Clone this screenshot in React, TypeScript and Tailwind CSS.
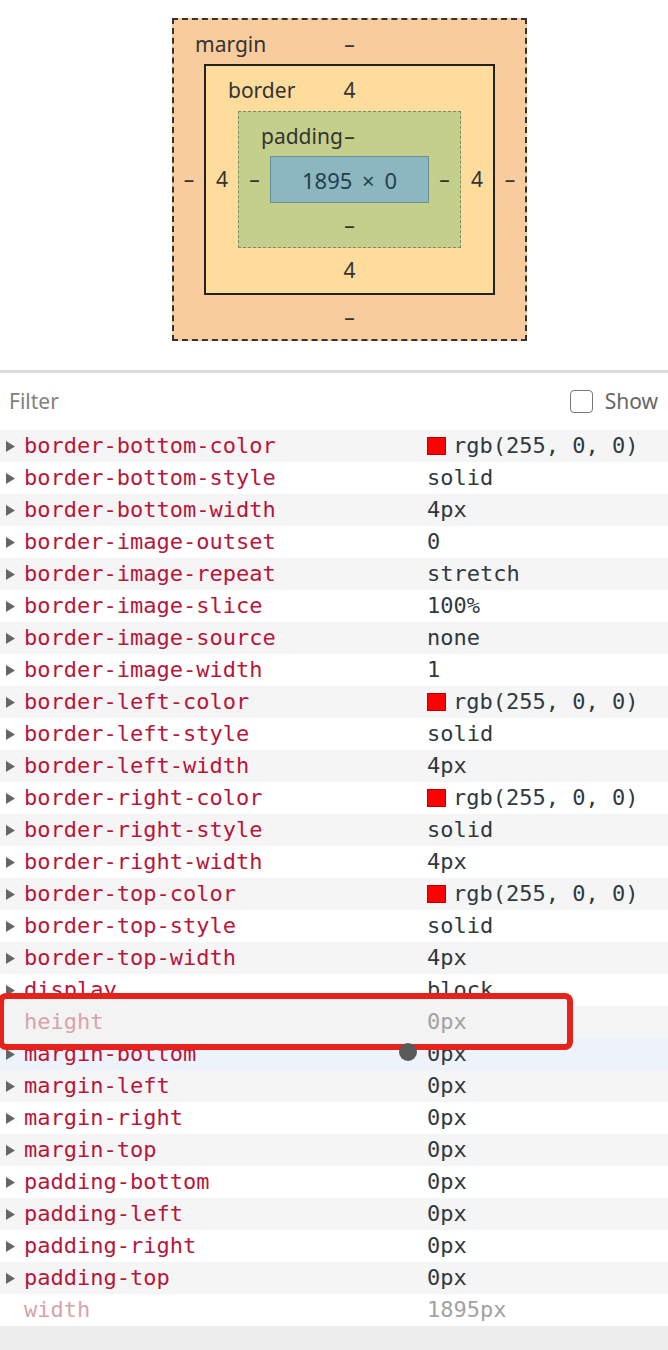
import React from 'react';

type Row = {
  name: string;
  value: string;
  swatch?: boolean;
  inherited?: boolean;
  hover?: boolean;
};

const rows: Row[] = [
  { name: 'border-bottom-color', value: 'rgb(255, 0, 0)', swatch: true },
  { name: 'border-bottom-style', value: 'solid' },
  { name: 'border-bottom-width', value: '4px' },
  { name: 'border-image-outset', value: '0' },
  { name: 'border-image-repeat', value: 'stretch' },
  { name: 'border-image-slice', value: '100%' },
  { name: 'border-image-source', value: 'none' },
  { name: 'border-image-width', value: '1' },
  { name: 'border-left-color', value: 'rgb(255, 0, 0)', swatch: true },
  { name: 'border-left-style', value: 'solid' },
  { name: 'border-left-width', value: '4px' },
  { name: 'border-right-color', value: 'rgb(255, 0, 0)', swatch: true },
  { name: 'border-right-style', value: 'solid' },
  { name: 'border-right-width', value: '4px' },
  { name: 'border-top-color', value: 'rgb(255, 0, 0)', swatch: true },
  { name: 'border-top-style', value: 'solid' },
  { name: 'border-top-width', value: '4px' },
  { name: 'display', value: 'block' },
  { name: 'height', value: '0px', inherited: true },
  { name: 'margin-bottom', value: '0px', hover: true },
  { name: 'margin-left', value: '0px' },
  { name: 'margin-right', value: '0px' },
  { name: 'margin-top', value: '0px' },
  { name: 'padding-bottom', value: '0px' },
  { name: 'padding-left', value: '0px' },
  { name: 'padding-right', value: '0px' },
  { name: 'padding-top', value: '0px' },
  { name: 'width', value: '1895px', inherited: true },
];

const sans = "font-['Noto_Sans','Open_Sans',sans-serif]";
const mono = "font-['DejaVu_Sans_Mono','Liberation_Mono',monospace]";

function Triangle() {
  return (
    <svg width="9" height="11" viewBox="0 0 9 11">
      <polygon points="0,0 9,5.5 0,11" fill="#666" />
    </svg>
  );
}

function TopLine({ label, value, pad }: { label: string; value: string; pad: string }) {
  return (
    <div className="col-span-3 grid grid-cols-[minmax(0,1fr)_auto_minmax(0,1fr)] items-center pt-1">
      <span className={`${pad} whitespace-nowrap`}>{label}</span>
      <span>{value}</span>
      <span />
    </div>
  );
}

function BoxModel() {
  return (
    <div className={`h-[370px] pl-[172px] pt-[18px] text-[21px] leading-none text-[#333] ${sans}`}>
      {/* margin */}
      <div className="grid h-[323px] w-[355px] grid-cols-[30px_1fr_30px] grid-rows-[44px_1fr_44px] border-2 border-dashed border-[#333] bg-[#f9cc9d]">
        <TopLine label="margin" value="–" pad="pl-[21px]" />
        <div className="flex items-center justify-center">–</div>
        {/* border */}
        <div className="grid grid-cols-[32px_1fr_32px] grid-rows-[45px_1fr_45px] border-2 border-[#222] bg-[#fedc9c]">
          <TopLine label="border" value="4" pad="pl-[22px]" />
          <div className="flex items-center justify-center">4</div>
          {/* padding */}
          <div className="grid grid-cols-[31px_1fr_31px] grid-rows-[44px_1fr_44px] border border-dashed border-[#7f8a6a] bg-[#c3cf8a]">
            <TopLine label="padding" value="–" pad="pl-[22px]" />
            <div className="flex items-center justify-center">–</div>
            <div className="flex items-center justify-center border border-[#6a8f99] bg-[#8cb6c0] text-[22px] text-[#24404c] [word-spacing:4px]">
              1895 × 0
            </div>
            <div className="flex items-center justify-center">–</div>
            <div className="col-span-3 flex items-center justify-center">–</div>
          </div>
          <div className="flex items-center justify-center">4</div>
          <div className="col-span-3 flex items-center justify-center">4</div>
        </div>
        <div className="flex items-center justify-center">–</div>
        <div className="col-span-3 flex items-center justify-center">–</div>
      </div>
    </div>
  );
}

function FilterBar() {
  return (
    <div className={`flex h-[60px] items-center justify-between border-t-[3px] border-[#dcdcdc] pl-[9px] pr-[10px] ${sans} text-[21px]`}>
      <span className="text-[#808080]">Filter</span>
      <div className="flex items-center gap-[12px] whitespace-nowrap">
        <span className="h-[23px] w-[23px] rounded-[4px] border-[1.5px] border-[#777] bg-white" />
        <span className="text-[#666]">Show</span>
      </div>
    </div>
  );
}

function PropertyRow({ row, index }: { row: Row; index: number }) {
  const bg = row.hover ? 'bg-[#eef2fa]' : index % 2 === 0 ? 'bg-[#f5f5f5]' : 'bg-white';
  return (
    <div className={`flex h-8 items-center ${bg}`}>
      <div className="flex w-6 pl-[6px]">{!row.inherited && <Triangle />}</div>
      <span className={`w-[403px] ${row.inherited ? 'text-[#d8a3a9]' : 'text-[#b8163a]'}`}>{row.name}</span>
      <span className={`flex items-center ${row.inherited ? 'text-[#a2a2a2]' : 'text-[#303942]'}`}>
        {row.swatch && <span className="mr-[7px] h-[18px] w-[19px] border border-[#b00] bg-[#ff0000]" />}
        {row.value}
      </span>
    </div>
  );
}

export default function App() {
  return (
    <div className="h-[1350px] w-[668px] overflow-hidden bg-[#ededed]">
      <div className="bg-white">
        <BoxModel />
        <FilterBar />
      </div>
      <div className={`relative ${mono} text-[22px] leading-none`}>
        {rows.map((r, i) => (
          <PropertyRow key={r.name} row={r} index={i} />
        ))}

        {/* annotation around the height row */}
        <div className="absolute left-[-2px] top-[563px] flex h-[57px] w-[575px] items-center rounded-[8px] border-[6px] border-[#e5231b] bg-[#f3f3f3]">
          <span className="w-[423px] pl-[20px] text-[#d8a3a9]">height</span>
          <span className="text-[#a2a2a2]">0px</span>
        </div>

        {/* cursor marker */}
        <div className="absolute left-[399px] top-[613px] h-[18px] w-[18px] rounded-full bg-[#5a5a5a]" />
      </div>
    </div>
  );
}
